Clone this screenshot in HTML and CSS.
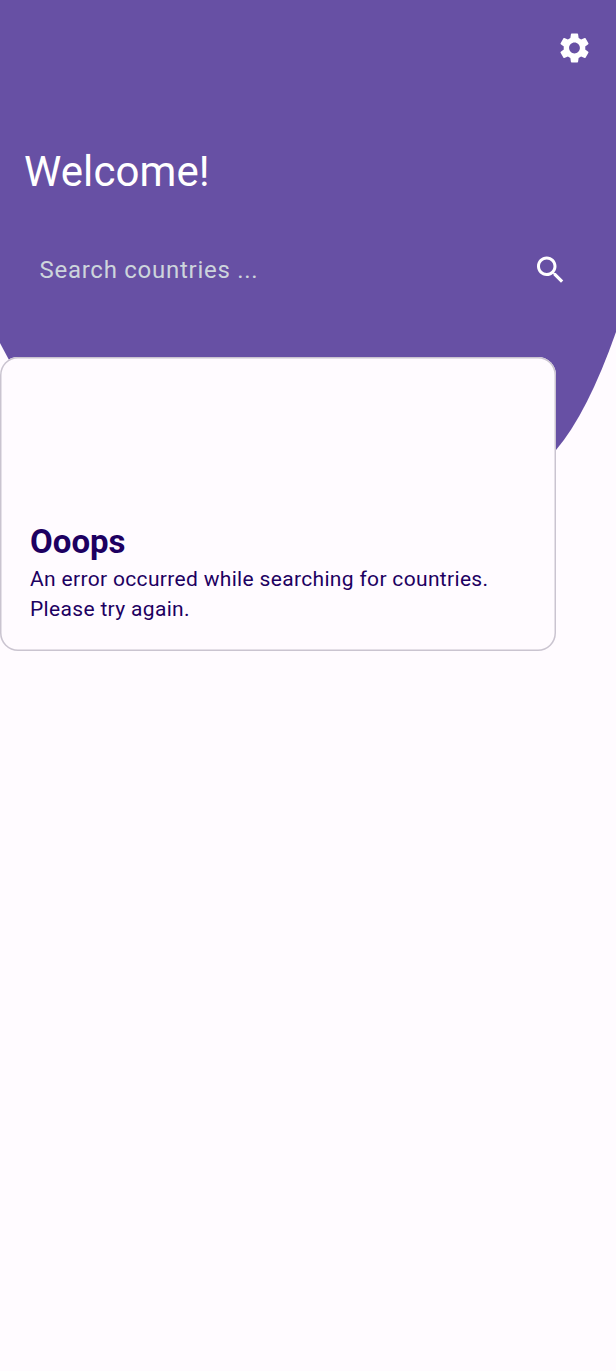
FILE: index.html
```
<!DOCTYPE html>
<html lang="en">
<head>
<meta charset="utf-8">
<meta name="viewport" content="width=device-width, initial-scale=1">
<title>Countries</title>
<link rel="stylesheet" href="styles.css">
</head>
<body>
<div class="screen">
  <svg class="backdrop" viewBox="0 0 616 480" aria-hidden="true"><path d="M0 0H616V332Q587.500 413 556 450Q530 480 500 480H100Q50 435 9 360L0 343Z"/></svg>
  <header class="header">
    <div class="toolbar">
      <svg class="icon" viewBox="-.33 0 24 24"><path d="M19.140 12.940c.04-.3.060-.61.060-.94 0-.32-.02-.64-.07-.94l2.030-1.580c.18-.14.230-.41.120-.61l-1.920-3.320c-.12-.22-.37-.29-.59-.22l-2.390.96c-.5-.38-1.030-.7-1.620-.94l-.36-2.540c-.04-.24-.24-.41-.48-.41h-3.840c-.24 0-.43.170-.47.410l-.36 2.540c-.59.240-1.130.570-1.620.940l-2.390-.96c-.22-.08-.47 0-.59.220L2.740 8.870c-.12.210-.08.470.120.610l2.030 1.580c-.05.300-.09.630-.09.940s.02.640.070.940l-2.030 1.580c-.18.140-.23.410-.12.610l1.920 3.320c.12.220.370.290.590.220l2.390-.96c.5.380 1.030.700 1.620.940l.36 2.540c.05.240.240.410.480.410h3.840c.24 0 .44-.17.470-.41l.36-2.540c.59-.24 1.130-.56 1.620-.94l2.390.96c.22.080.470 0 .59-.22l1.920-3.320c.12-.22.070-.47-.12-.61l-2.010-1.580zM12 15.600c-1.980 0-3.600-1.620-3.600-3.600s1.620-3.600 3.600-3.600 3.600 1.620 3.600 3.600-1.620 3.600-3.600 3.600z"/></svg>
    </div>
    <h1 class="title">Welcome!</h1>
    <div class="search">
      <span class="placeholder">Search countries ...</span>
      <svg class="icon" viewBox="-.33 0 24 24"><path d="M15.500 14h-.79l-.28-.27C15.410 12.590 16 11.110 16 9.500 16 5.910 13.090 3 9.500 3S3 5.910 3 9.500 5.910 16 9.500 16c1.610 0 3.090-.59 4.230-1.570l.27.280v.79l5 4.990L20.490 19l-4.990-5zm-6 0C7.010 14 5 11.990 5 9.500S7.010 5 9.500 5 14 7.010 14 9.500 11.990 14 9.500 14z"/></svg>
    </div>
  </header>
  <section class="card">
    <h2 class="card-title">Ooops</h2>
    <p class="message">An error occurred while searching for countries.<br>Please try again.</p>
  </section>
</div>
</body>
</html>
```
FILE: styles.css
```
* { box-sizing: border-box; }
body { margin: 0; background: #fffbff; font-family: Roboto, sans-serif; }
.screen { position: relative; isolation: isolate; min-height: 1371px; overflow: hidden; }
.backdrop { position: absolute; inset: 0 0 auto; z-index: -1; display: block; width: 616px; height: 480px; fill: #6750a4; }
.header { height: 357px; padding-top: 30px; color: #fff; }
.toolbar { display: flex; justify-content: flex-end; padding-right: 24px; }
.icon { display: block; width: 36px; height: 36px; fill: #fff; }
.title { margin: 79px 0 0 24px; font-size: 42px; line-height: 54px; font-weight: 400; letter-spacing: .1px; }
.search { display: flex; align-items: center; justify-content: space-between; height: 84px; margin-top: 29px; padding: 0 48px 0 39.5px; }
.placeholder { font-size: 24px; line-height: 36px; letter-spacing: .73px; color: #cdd5dc; }
.card { display: flex; flex-direction: column; justify-content: flex-end; width: 556.4px; height: 294px; padding: 0 30px 27px; border-radius: 18px; background: #fffbff; box-shadow: inset 0 0 0 1.5px #cac4d0; color: #1d0061; }
.card-title { margin: 0; font-size: 33px; line-height: 42px; font-weight: 700; }
.message { margin: 1px 0 0; font-size: 21px; line-height: 30px; letter-spacing: .33px; }
```
